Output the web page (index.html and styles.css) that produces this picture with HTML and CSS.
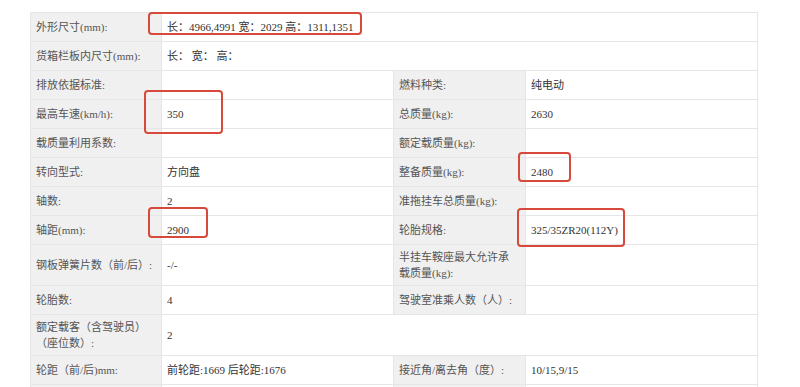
FILE: index.html
```html
<!DOCTYPE html>
<html lang="zh">
<head>
<meta charset="utf-8">
<link rel="stylesheet" href="styles.css">
</head>
<body>
<div class="page">
  <table class="spec">
    <colgroup>
      <col class="c-label"><col class="c-value"><col class="c-label2"><col class="c-value2">
    </colgroup>
    <tbody>
      <tr><th><div class="cell">外形尺寸(mm):</div></th><td colspan="3"><div class="cell">长：4966,4991 宽：2029 高：1311,1351</div></td></tr>
      <tr><th><div class="cell">货箱栏板内尺寸(mm):</div></th><td colspan="3"><div class="cell">长： 宽： 高：</div></td></tr>
      <tr><th><div class="cell">排放依据标准:</div></th><td><div class="cell"></div></td><th><div class="cell">燃料种类:</div></th><td><div class="cell">纯电动</div></td></tr>
      <tr><th><div class="cell">最高车速(km/h):</div></th><td><div class="cell">350</div></td><th><div class="cell">总质量(kg):</div></th><td><div class="cell">2630</div></td></tr>
      <tr><th><div class="cell">载质量利用系数:</div></th><td><div class="cell"></div></td><th><div class="cell">额定载质量(kg):</div></th><td><div class="cell"></div></td></tr>
      <tr><th><div class="cell">转向型式:</div></th><td><div class="cell">方向盘</div></td><th><div class="cell">整备质量(kg):</div></th><td><div class="cell">2480</div></td></tr>
      <tr><th><div class="cell">轴数:</div></th><td><div class="cell">2</div></td><th><div class="cell">准拖挂车总质量(kg):</div></th><td><div class="cell"></div></td></tr>
      <tr><th><div class="cell">轴距(mm):</div></th><td><div class="cell">2900</div></td><th><div class="cell">轮胎规格:</div></th><td><div class="cell">325/35ZR20(112Y)</div></td></tr>
      <tr><th><div class="cell nowrap">钢板弹簧片数（前/后）:</div></th><td><div class="cell">-/-</div></td><th><div class="cell">半挂车鞍座最大允许承载质量(kg):</div></th><td><div class="cell"></div></td></tr>
      <tr><th><div class="cell">轮胎数:</div></th><td><div class="cell">4</div></td><th><div class="cell">驾驶室准乘人数（人）:</div></th><td><div class="cell"></div></td></tr>
      <tr><th><div class="cell">额定载客（含驾驶员）（座位数）:</div></th><td colspan="3"><div class="cell">2</div></td></tr>
      <tr><th><div class="cell">轮距（前/后)mm:</div></th><td><div class="cell">前轮距:1669 后轮距:1676</div></td><th><div class="cell">接近角/离去角（度）:</div></th><td><div class="cell">10/15,9/15</div></td></tr>
      <tr><th><div class="cell"></div></th><td><div class="cell"></div></td><th><div class="cell"></div></th><td><div class="cell"></div></td></tr>
    </tbody>
  </table>
  <div class="mark mark-size"></div>
  <div class="mark mark-speed"></div>
  <div class="mark mark-curb"></div>
  <div class="mark mark-base"></div>
  <div class="mark mark-tyre"></div>
</div>
</body>
</html>
```
FILE: styles.css
```css
html, body {
  margin: 0;
  padding: 0;
  background: #ffffff;
  overflow: hidden;
}
.page {
  position: relative;
  width: 800px;
  height: 387px;
  overflow: hidden;
  padding: 12px 0 0 30px;
  box-sizing: border-box;
  font-family: "Liberation Serif", "Noto Sans CJK SC", serif;
  font-size: 11px;
}
.spec {
  border-collapse: collapse;
  table-layout: fixed;
  width: 727px;
}
.c-label { width: 131px; }
.c-value { width: 232px; }
.c-label2 { width: 132px; }
.c-value2 { width: 232px; }
.spec th,
.spec td {
  border: 1px solid #e6e6e6;
  padding: 4px 4px 4px 5px;
  text-align: left;
  font-weight: normal;
  vertical-align: middle;
}
.spec th {
  background: #f0f0f0;
  color: #555555;
  padding-right: 8px;
}
.spec td {
  background: #ffffff;
  color: #333333;
}
.cell {
  min-height: 20px;
  line-height: 16px;
  display: flex;
  align-items: center;
}
.nowrap {
  white-space: nowrap;
}
.mark {
  position: absolute;
  box-sizing: border-box;
  border: 2px solid #d6493b;
  border-radius: 4px;
}
.mark-size { left: 148px; top: 12px; width: 214px; height: 23px; }
.mark-speed { left: 144px; top: 90px; width: 79px; height: 44px; }
.mark-curb { left: 518px; top: 152px; width: 53px; height: 30px; }
.mark-base { left: 148px; top: 207px; width: 60px; height: 31px; }
.mark-tyre { left: 517px; top: 208px; width: 108px; height: 39px; }
```
